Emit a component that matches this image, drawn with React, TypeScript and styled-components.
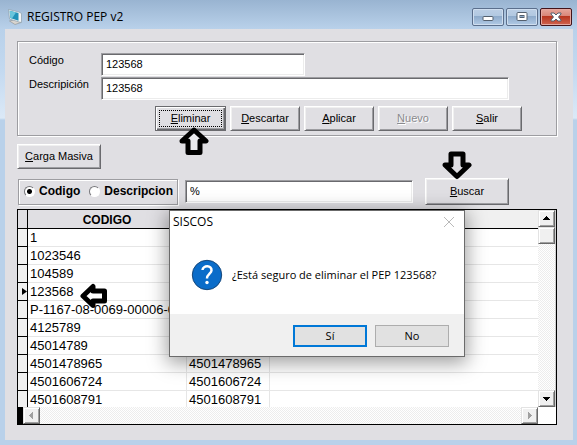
import React, { useState } from "react";
import styled, { createGlobalStyle, css } from "styled-components";

const GlobalStyle = createGlobalStyle`
  * { box-sizing: border-box; }
  html, body { margin: 0; height: 100%; overflow: hidden; }
  body { font: 11px/13px "Liberation Sans", Arial, sans-serif; color: #000; }
  #root { height: 100%; }
  button, input { font: inherit; color: inherit; margin: 0; }
`;

const dialogFont = `"Open Sans", "Segoe UI", sans-serif`;

const Window = styled.div`
  position: relative;
  display: flex;
  flex-direction: column;
  height: 100vh;
  padding: 0 4px 5px 5px;
  background: linear-gradient(#99b4d1 0, #b9d1ea 29px, #c3d9f0 70px, #dbe9f7 118px, #b9d1ea 120px);
`;

const TitleBar = styled.header`
  display: flex;
  align-items: center;
  gap: 5px;
  flex: none;
  height: 29px;
  padding: 6px 1px 2px 3px;
`;

const Title = styled.h1`
  flex: 1;
  margin: 0;
  font: 12px/20px ${dialogFont};
`;

const Controls = styled.div`
  display: flex;
  gap: 2px;
`;

const ControlButton = styled.button<{ $close?: boolean }>`
  display: grid;
  place-items: center;
  width: 32px;
  height: 18px;
  padding: 0;
  border: 1px solid ${(p) => (p.$close ? "#43141a" : "#5b6f8c")};
  border-radius: 2px;
  box-shadow: inset 0 0 0 1px ${(p) => (p.$close ? "#e5a8a0" : "#cfdeef")};
  background: ${(p) =>
    p.$close
      ? "linear-gradient(#e6a69b 0, #d98577 45%, #b8361f 46%, #cf6450 100%)"
      : "linear-gradient(#bccfe5 0, #b1c8e1 45%, #8eabcb 46%, #b1cae5 100%)"};
`;

const Client = styled.main`
  display: flex;
  flex-direction: column;
  flex: 1;
  min-height: 0;
  padding: 12px 16px 15px 12px;
  background: #e0dfe3;
`;

const grooved = css`
  border: 1px solid #9d9da1;
  box-shadow: inset 1px 1px 0 #fff, 1px 1px 0 #fff;
`;

const RecordPanel = styled.section`
  ${grooved}
  flex: none;
  padding: 11px 34px 4px 11px;
`;

const Field = styled.div`
  display: flex;
  margin-bottom: 1px;
`;

const FieldLabel = styled.label`
  width: 72px;
  padding-top: 1px;
`;

const sunken = css`
  height: 23px;
  padding: 0 4px 2px;
  border: 1px solid;
  border-color: #9d9da1 #fff #fff #9d9da1;
  box-shadow: inset 1px 1px 0 #6a6a6e, inset -1px -1px 0 #ececec;
  background: #fff;
  outline: none;
`;

const TextBox = styled.input<{ $share: number }>`
  ${sunken}
  display: block;
  width: ${(p) => p.$share}%;
  min-width: 0;
`;

const FieldBody = styled.div`
  flex: 1;
  margin-right: 13px;
`;

const ButtonRow = styled.div`
  display: flex;
  justify-content: flex-end;
  gap: 4px;
  margin-top: 6px;
`;

const PushButton = styled.button<{ $width: number; $tall?: boolean; $focused?: boolean }>`
  position: relative;
  flex: none;
  width: ${(p) => p.$width}px;
  height: ${(p) => (p.$tall ? 27 : 25)}px;
  padding: 0 0 1px;
  border: 1px solid;
  border-color: #fff #6a6a6e #6a6a6e #fff;
  box-shadow: inset 1px 1px 0 #f0f0f0, inset -1px -1px 0 #9d9da1;
  background: #e0dfe3;

  ${(p) =>
    p.$focused &&
    css`
      border-color: #6a6a6e;
      box-shadow: inset 1px 1px 0 #fff, inset -1px -1px 0 #6a6a6e, inset -2px -2px 0 #9d9da1;
      &::after {
        content: "";
        position: absolute;
        inset: 3px;
        border: 1px dotted #000;
      }
    `}

  &:disabled {
    color: #8a8a8e;
    text-shadow: 1px 1px 0 #fff;
  }
`;

const LoadRow = styled.div`
  display: flex;
  flex: none;
  margin-top: 8px;
`;

const SearchRow = styled.div`
  display: flex;
  align-items: center;
  flex: none;
  margin: 9px 48px 4px 1px;
`;

const RadioGroup = styled.fieldset`
  ${grooved}
  display: flex;
  align-items: center;
  gap: 9px;
  width: 160px;
  height: 26px;
  margin: 0 7px 0 0;
  padding: 0 0 0 5px;
`;

const RadioLabel = styled.label`
  display: flex;
  align-items: center;
  gap: 4px;
  font-size: 12px;
  font-weight: bold;
`;

const Radio = styled.input`
  appearance: none;
  width: 11px;
  height: 11px;
  border: 1px solid;
  border-color: #77777b #fff #fff #77777b;
  border-radius: 50%;
  background: #fff;
  &:checked {
    background: radial-gradient(circle, #000 0 2px, #fff 3px);
  }
`;

const SearchBox = styled.input`
  ${sunken}
  flex: 1;
  min-width: 0;
  margin-right: 12px;
`;

const GridFrame = styled.section`
  display: grid;
  grid-template: minmax(0, 1fr) 17px / minmax(0, 1fr) 18px;
  flex: 1;
  min-height: 0;
  border: 1px solid #000;
  background: #fff;
`;

const GridBody = styled.div`
  overflow: hidden;
`;

const Table = styled.table`
  width: 100%;
  table-layout: fixed;
  border-collapse: separate;
  border-spacing: 0;
  line-height: 16px;
`;

const HeadCell = styled.th<{ $width?: number; $plain?: boolean }>`
  width: ${(p) => (p.$width ? `${p.$width}px` : "auto")};
  height: 19px;
  padding: 1px 0 0;
  border-bottom: 1px solid #000;
  border-right: ${(p) => (p.$plain ? "0" : "1px solid #000")};
  background: ${(p) => (p.$plain ? "#f0f0f0" : "#e0dfe3")};
  font-size: 12px;
`;

const Marker = styled.td`
  height: 18px;
  padding: 0 0 0 4px;
  border-right: 1px solid #000;
  border-bottom: 1px solid #000;
  background: #f0f0f0;
  line-height: 0;
`;

const Cell = styled.td`
  height: 18px;
  padding: 1px 0 0 2px;
  border-right: 1px solid #e6e6e6;
  border-bottom: 1px solid #e6e6e6;
  font-size: 13px;
  white-space: nowrap;
  overflow: hidden;
  &:last-child { border-right: 0; }
`;

const ScrollTrack = styled.div<{ $horizontal?: boolean }>`
  display: flex;
  flex-direction: ${(p) => (p.$horizontal ? "row" : "column")};
  border-left: ${(p) => (p.$horizontal ? "5px solid #000" : "0")};
  border-right: ${(p) => (p.$horizontal ? "0" : "1px solid #d0d0d0")};
  background: repeating-conic-gradient(#fff 0 25%, #ededed 0 50%) 0 0 / 2px 2px;
`;

const ScrollButton = styled.button<{ $end?: boolean }>`
  display: grid;
  place-items: center;
  flex: none;
  width: 17px;
  height: 17px;
  margin: ${(p) => (p.$end ? "auto 0 0 auto" : "0")};
  padding: 0;
  border: 1px solid;
  border-color: #e3e3e3 #696969 #696969 #e3e3e3;
  box-shadow: inset 1px 1px 0 #fff, inset -1px -1px 0 #a0a0a0;
  background: #f0f0f0;
`;

const Dialog = styled.div`
  position: absolute;
  left: 169px;
  top: 210px;
  display: flex;
  flex-direction: column;
  width: 296px;
  border: 1px solid #6b6b6b;
  background: #fff;
  box-shadow: 0 4px 18px 2px rgba(0, 0, 0, 0.38);
  font: 12px/16px ${dialogFont};
`;

const DialogHead = styled.div`
  display: flex;
  align-items: center;
  justify-content: space-between;
  padding: 3px 9px 3px 3px;
`;

const CloseButton = styled.button`
  padding: 0;
  border: 0;
  background: none;
  line-height: 0;
`;

const DialogBody = styled.div`
  display: flex;
  align-items: center;
  gap: 9px;
  height: 81px;
  padding: 3px 20px 0 21px;
  font-size: 11px;
`;

const DialogFoot = styled.div`
  display: flex;
  justify-content: flex-end;
  gap: 8px;
  padding: 11px 15px 9px;
  background: #f0f0f0;
`;

const DialogButton = styled.button<{ $primary?: boolean }>`
  width: 74px;
  height: 22px;
  padding: 0;
  border: ${(p) => (p.$primary ? "2px solid #0078d7" : "1px solid #adadad")};
  background: #e1e1e1;
  font-size: 11px;
`;

const Pointer = styled.svg<{ $x: number; $y: number }>`
  position: absolute;
  left: ${(p) => p.$x}px;
  top: ${(p) => p.$y}px;
  stroke: #000;
  stroke-width: 5px;
  stroke-linejoin: round;
  pointer-events: none;
`;

const rows: [string, string][] = [
  ["1", ""],
  ["1023546", ""],
  ["104589", ""],
  ["123568", ""],
  ["P-1167-08-0069-00006-0", ""],
  ["4125789", ""],
  ["45014789", ""],
  ["4501478965", "4501478965"],
  ["4501606724", "4501606724"],
  ["4501608791", "4501608791"],
];

function AppIcon() {
  return (
    <svg width="14" height="16" viewBox="0 0 14 16" aria-hidden="true">
      <path d="M1.500 12 7 10.500 13 13.500 7 15.500Z" fill="#d9d5cf" stroke="#8c8e91" strokeWidth=".6" />
      <path d="M0.500 0.500 11 3 13.500 4.500V13.500L11 13 1.500 10Z" fill="#f3f5f6" stroke="#8b9dab" strokeWidth=".7" />
      <path d="M1.700 1.800 10.500 4V11.700L2.300 9Z" fill="#2191b8" />
      <path d="M1.700 1.800 8 3.400 4 9.500 2.300 9Z" fill="#69c5dc" />
    </svg>
  );
}

function Triangle({ dir, muted }: { dir: "up" | "down" | "left" | "right"; muted?: boolean }) {
  const paths = {
    up: "M4 2h1v1h1v1h1v1h1v1H1V5h1V4h1V3h1z",
    down: "M1 3h7v1H7v1H6v1H5v1H4V6H3V5H2V4H1z",
    left: "M6 1v7H5V7H4V6H3V5H2V4h1V3h1V2h1V1z",
    right: "M3 1v7h1V7h1V6h1V5h1V4H6V3H5V2H4V1z",
  };
  return (
    <svg width="9" height="9" viewBox="0 0 9 9" shapeRendering="crispEdges" aria-hidden="true">
      <path d={paths[dir]} fill={muted ? "#a0a0a0" : "#000"} />
    </svg>
  );
}

function Accel({ text }: { text: string }) {
  return (
    <>
      <u>{text[0]}</u>
      {text.slice(1)}
    </>
  );
}

export default function App() {
  const [code, setCode] = useState("123568");
  const [description, setDescription] = useState("123568");
  const [query, setQuery] = useState("%");
  const [mode, setMode] = useState("Codigo");

  return (
    <Window>
      <GlobalStyle />
      <TitleBar>
        <AppIcon />
        <Title>REGISTRO PEP v2</Title>
        <Controls>
          <ControlButton aria-label="Minimizar">
            <svg width="12" height="12" viewBox="0 0 12 12">
              <rect x="1" y="5.500" width="10" height="4" rx="1" fill="#fff" stroke="#54606e" />
            </svg>
          </ControlButton>
          <ControlButton aria-label="Maximizar">
            <svg width="12" height="12" viewBox="0 0 12 12">
              <rect x="1" y="1.500" width="10" height="8" rx="1" fill="#fff" stroke="#54606e" />
              <rect x="4" y="4.500" width="4" height="2" fill="#8eabcb" stroke="#54606e" />
            </svg>
          </ControlButton>
          <ControlButton $close aria-label="Cerrar">
            <svg width="12" height="10" viewBox="0 0 12 10">
              <path d="M1 1H4L6 3 8 1H11V2L8.500 5 11 8V9H8L6 7 4 9H1V8L3.500 5 1 2Z" fill="#fff" stroke="#54606e" />
            </svg>
          </ControlButton>
        </Controls>
      </TitleBar>

      <Client>
        <RecordPanel>
          <Field>
            <FieldLabel htmlFor="code">Código</FieldLabel>
            <FieldBody>
              <TextBox id="code" $share={50} value={code} onChange={(e) => setCode(e.target.value)} />
            </FieldBody>
          </Field>
          <Field>
            <FieldLabel htmlFor="description">Descripición</FieldLabel>
            <FieldBody>
              <TextBox
                id="description"
                $share={100}
                value={description}
                onChange={(e) => setDescription(e.target.value)}
              />
            </FieldBody>
          </Field>
          <ButtonRow>
            <PushButton $width={71} $focused><Accel text="Eliminar" /></PushButton>
            <PushButton $width={70}><Accel text="Descartar" /></PushButton>
            <PushButton $width={70}><Accel text="Aplicar" /></PushButton>
            <PushButton $width={70} disabled><Accel text="Nuevo" /></PushButton>
            <PushButton $width={70}><Accel text="Salir" /></PushButton>
          </ButtonRow>
        </RecordPanel>

        <LoadRow>
          <PushButton $width={84}><Accel text="Carga Masiva" /></PushButton>
        </LoadRow>

        <SearchRow>
          <RadioGroup aria-label="Buscar por">
            {["Codigo", "Descripcion"].map((name) => (
              <RadioLabel key={name}>
                <Radio type="radio" name="mode" checked={mode === name} onChange={() => setMode(name)} />
                {name}
              </RadioLabel>
            ))}
          </RadioGroup>
          <SearchBox aria-label="Texto a buscar" value={query} onChange={(e) => setQuery(e.target.value)} />
          <PushButton $width={84} $tall><Accel text="Buscar" /></PushButton>
        </SearchRow>

        <GridFrame>
          <GridBody>
            <Table>
              <thead>
                <tr>
                  <HeadCell $width={10} />
                  <HeadCell $width={159}>CODIGO</HeadCell>
                  <HeadCell $width={83} />
                  <HeadCell $plain />
                </tr>
              </thead>
              <tbody>
                {rows.map(([id, text]) => (
                  <tr key={id}>
                    <Marker>
                      {id === code && (
                        <svg width="5" height="7" viewBox="0 0 5 7" aria-label="Fila actual">
                          <path d="M0 0 5 3.500 0 7Z" />
                        </svg>
                      )}
                    </Marker>
                    <Cell>{id}</Cell>
                    <Cell>{text}</Cell>
                    <Cell />
                  </tr>
                ))}
              </tbody>
            </Table>
          </GridBody>
          <ScrollTrack>
            <ScrollButton aria-label="Subir"><Triangle dir="up" /></ScrollButton>
            <ScrollButton aria-label="Posición" />
            <ScrollButton $end aria-label="Bajar"><Triangle dir="down" /></ScrollButton>
          </ScrollTrack>
          <ScrollTrack $horizontal>
            <ScrollButton aria-label="Izquierda"><Triangle dir="left" muted /></ScrollButton>
            <ScrollButton $end aria-label="Derecha"><Triangle dir="right" muted /></ScrollButton>
          </ScrollTrack>
        </GridFrame>
      </Client>

      <Pointer $x={179} $y={127} width="30" height="29" viewBox="0 0 30 29" aria-hidden="true">
        <path d="M15 3 27 14H21V25.500H9V14H3Z" fill="#ebebee" />
      </Pointer>
      <Pointer $x={442} $y={151} width="30" height="29" viewBox="0 0 30 29" aria-hidden="true">
        <path d="M15 25.500 27 14H21V3H9V14H3Z" fill="#e0dfe3" />
      </Pointer>
      <Pointer $x={80} $y={283} width="28" height="26" viewBox="0 0 28 26" aria-hidden="true">
        <path d="M3 13 13 3.500V8H24.500V18H13V22.500Z" fill="#fff" />
      </Pointer>

      <Dialog role="dialog" aria-label="SISCOS">
        <DialogHead>
          <span>SISCOS</span>
          <CloseButton aria-label="Cerrar diálogo">
            <svg width="12" height="12" viewBox="0 0 12 12">
              <path d="M1 1 11 11M11 1 1 11" fill="none" stroke="#b9b9b9" />
            </svg>
          </CloseButton>
        </DialogHead>
        <DialogBody>
          <svg width="32" height="32" viewBox="0 0 32 32" aria-hidden="true">
            <circle cx="16" cy="16" r="14.700" fill="#0a6cc9" stroke="#16477a" />
            <path d="M11.500 11C12 6 21 6 20.500 11.500C20.300 14.500 16 15 16 19.500" fill="none" stroke="#fff" strokeWidth="2.500" />
            <circle cx="16" cy="23.500" r="1.700" fill="#fff" />
          </svg>
          <span>¿Está seguro de eliminar el PEP 123568?</span>
        </DialogBody>
        <DialogFoot>
          <DialogButton $primary>Sí</DialogButton>
          <DialogButton>No</DialogButton>
        </DialogFoot>
      </Dialog>
    </Window>
  );
}
